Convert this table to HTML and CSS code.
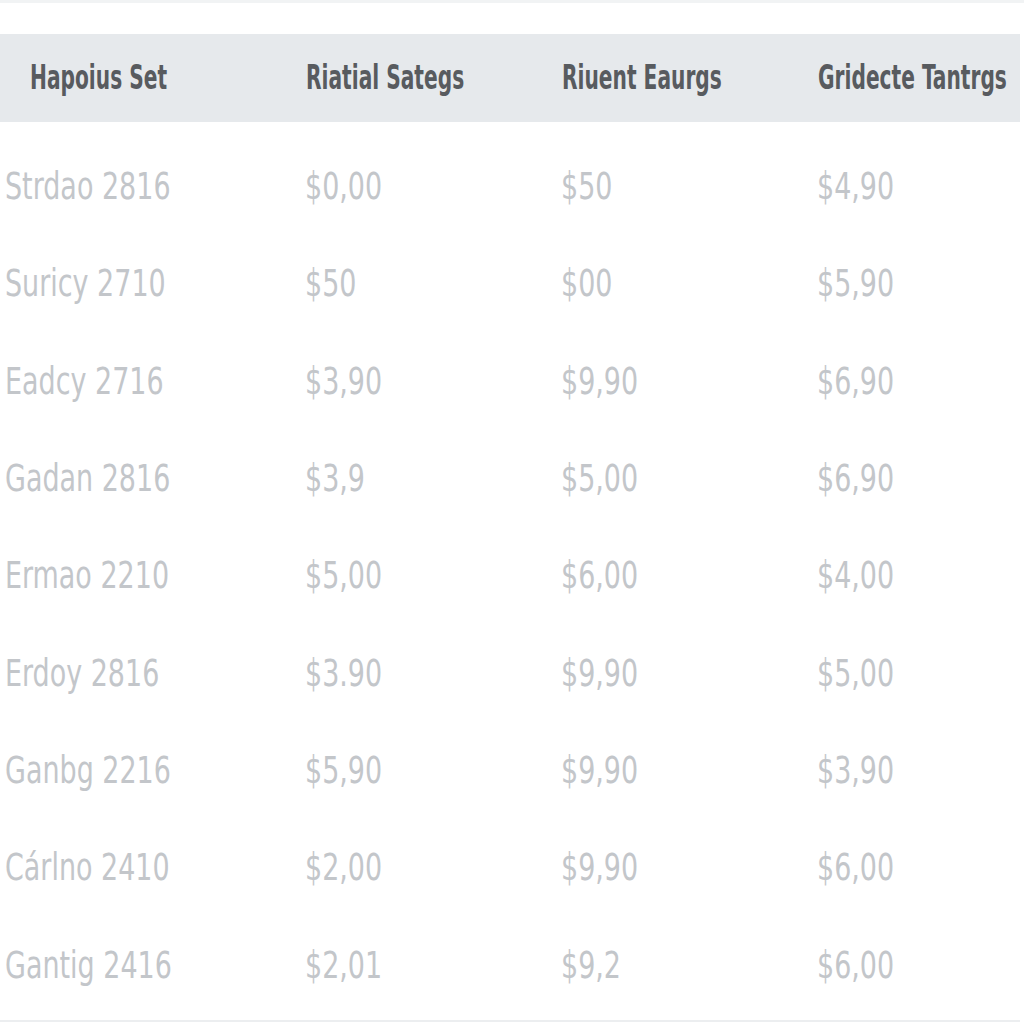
FILE: index.html
```html
<!DOCTYPE html>
<html>
<head>
<meta charset="utf-8">
<link rel="stylesheet" href="styles.css">
</head>
<body>
<div class="page">
  <div class="table">
    <div class="row head">
      <div class="cell c1"><span class="t">Hapoius Set</span></div>
      <div class="cell"><span class="t">Riatial Sategs</span></div>
      <div class="cell"><span class="t">Riuent Eaurgs</span></div>
      <div class="cell"><span class="t">Gridecte Tantrgs</span></div>
    </div>
    <div class="row"><div class="cell c1"><span class="t">Strdao 2816</span></div><div class="cell"><span class="t">$0,00</span></div><div class="cell"><span class="t">$50</span></div><div class="cell"><span class="t">$4,90</span></div></div>
    <div class="row"><div class="cell c1"><span class="t">Suricy 2710</span></div><div class="cell"><span class="t">$50</span></div><div class="cell"><span class="t">$00</span></div><div class="cell"><span class="t">$5,90</span></div></div>
    <div class="row"><div class="cell c1"><span class="t">Eadcy 2716</span></div><div class="cell"><span class="t">$3,90</span></div><div class="cell"><span class="t">$9,90</span></div><div class="cell"><span class="t">$6,90</span></div></div>
    <div class="row"><div class="cell c1"><span class="t">Gadan 2816</span></div><div class="cell"><span class="t">$3,9</span></div><div class="cell"><span class="t">$5,00</span></div><div class="cell"><span class="t">$6,90</span></div></div>
    <div class="row"><div class="cell c1"><span class="t">Ermao 2210</span></div><div class="cell"><span class="t">$5,00</span></div><div class="cell"><span class="t">$6,00</span></div><div class="cell"><span class="t">$4,00</span></div></div>
    <div class="row"><div class="cell c1"><span class="t">Erdoy 2816</span></div><div class="cell"><span class="t">$3.90</span></div><div class="cell"><span class="t">$9,90</span></div><div class="cell"><span class="t">$5,00</span></div></div>
    <div class="row"><div class="cell c1"><span class="t">Ganbg 2216</span></div><div class="cell"><span class="t">$5,90</span></div><div class="cell"><span class="t">$9,90</span></div><div class="cell"><span class="t">$3,90</span></div></div>
    <div class="row"><div class="cell c1"><span class="t">Cárlno 2410</span></div><div class="cell"><span class="t">$2,00</span></div><div class="cell"><span class="t">$9,90</span></div><div class="cell"><span class="t">$6,00</span></div></div>
    <div class="row"><div class="cell c1"><span class="t">Gantig 2416</span></div><div class="cell"><span class="t">$2,01</span></div><div class="cell"><span class="t">$9,2</span></div><div class="cell"><span class="t">$6,00</span></div></div>
  </div>
</div>
</body>
</html>
```
FILE: styles.css
```css
html, body {
  margin: 0;
  padding: 0;
  background: #ffffff;
}
.page {
  width: 1024px;
  height: 1024px;
  box-sizing: border-box;
  overflow: hidden;
  border-top: 3px solid #f1f3f4;
  padding-top: 31px;
  font-family: "DejaVu Sans Condensed", "DejaVu Sans", sans-serif;
  font-stretch: condensed;
}
.table {
  width: 1020px;
  padding-bottom: 6px;
  border-bottom: 2px solid #eceef0;
}
.row {
  display: grid;
  grid-template-columns: 305px 256px 256px 203px;
  height: 97.3px;
  align-items: center;
  color: #c3c6ca;
  font-size: 37px;
}
.cell {
  white-space: nowrap;
  overflow: hidden;
  min-width: 0;
}
.t {
  display: inline-block;
  transform: scaleX(0.81);
  transform-origin: left center;
}
.row .cell.c1 {
  padding-left: 5px;
}
.row.head {
  height: 88px;
  background: #e6e9ec;
  color: #585b5f;
  font-size: 33px;
  font-weight: 600;
  margin-bottom: 16px;
}
.row.head .t {
  transform: scaleX(0.68);
}
.row.head .cell {
  padding-left: 1px;
  padding-bottom: 2px;
}
.row.head .cell.c1 {
  padding-left: 30px;
}
```
